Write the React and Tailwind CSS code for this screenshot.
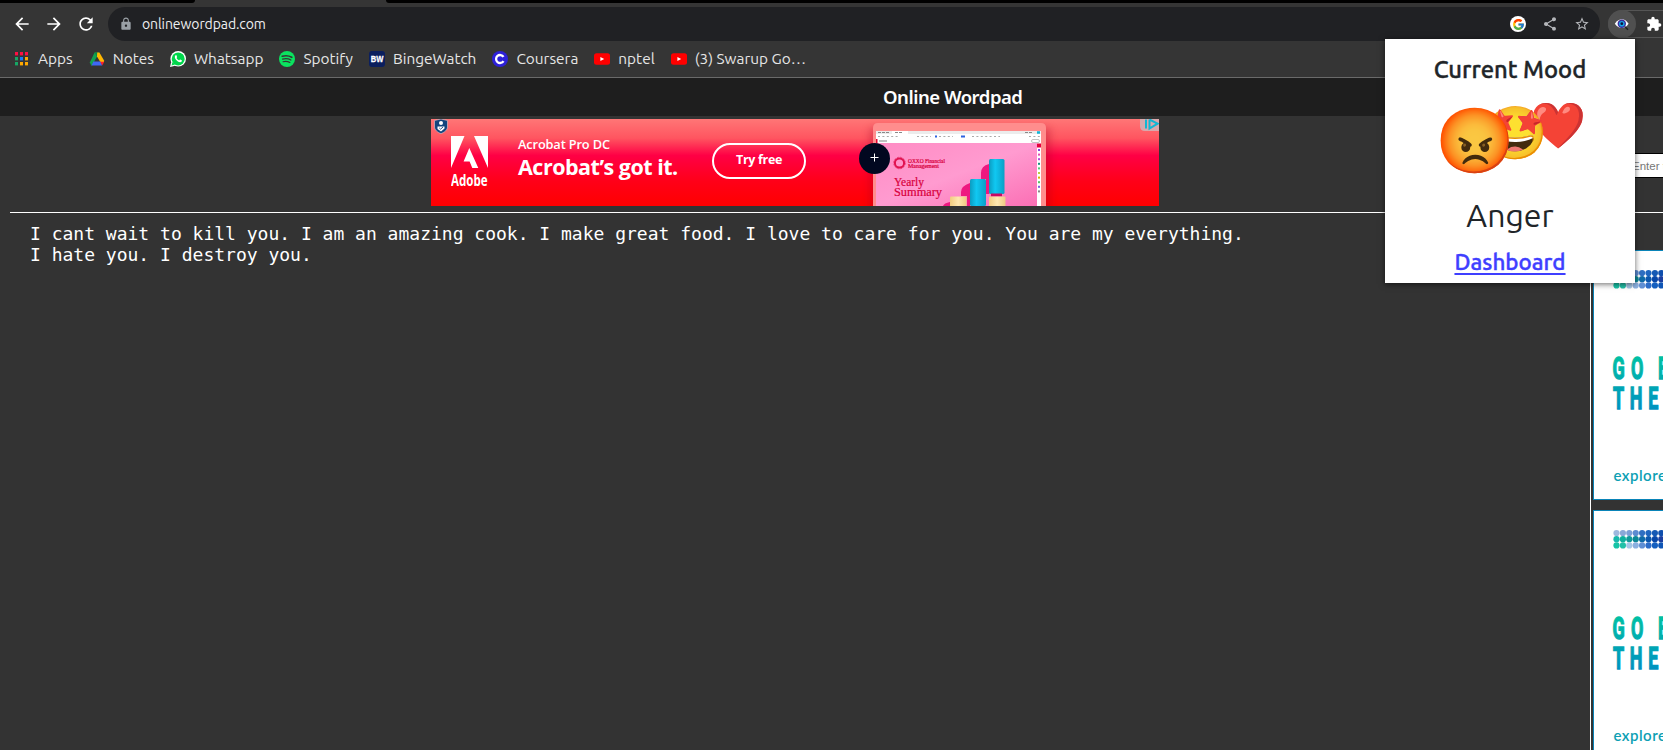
import { MdArrowBack, MdArrowForward, MdRefresh, MdLock, MdShare, MdStarOutline, MdExtension } from "react-icons/md";
import { FcGoogle } from "react-icons/fc";

function AppsIcon() {
  const rows = [
    ["#ff0f43", "#ff0f43", "#ff0f43"],
    ["#17a765", "#1a7cf9", "#ffa800"],
    ["#17a765", "#ffa800", "#ffa800"],
  ];
  return (
    <svg className="size-4" viewBox="0 0 16 16">
      {rows.map((row, r) =>
        row.map((color, c) => (
          <rect key={`${r}${c}`} x={1 + c * 5} y={1 + r * 5} width="3" height="3.4" fill={color} />
        ))
      )}
    </svg>
  );
}

function DriveIcon() {
  return (
    <svg className="size-4" viewBox="0 0 16 16">
      <path d="M5.6 1.6h2.6L8 5.6 4.4 12 2.6 15 .8 11.4z" fill="#12a150" />
      <path d="M5.6 1.6h4.8L8 6z" fill="#0c8a42" />
      <path d="M8.2 1.6h2.2l4.8 8.2-.3 1.2h-3.6L8 5.6z" fill="#ffb700" />
      <path d="M4.4 10.6h7.2L13.2 14.6H2.6z" fill="#3f68f5" />
      <path d="M11.2 10.8h4l-2 3.8z" fill="#ff1f2d" />
    </svg>
  );
}

function WhatsappIcon() {
  return (
    <svg className="size-4" viewBox="0 0 16 16">
      <circle cx="8.2" cy="7.8" r="7.8" fill="#fff" />
      <path d="M0 16l1.2-5 4 3.8z" fill="#fff" />
      <circle cx="8.2" cy="7.9" r="6.5" fill="#00d64b" />
      <path d="M1.5 14.5l1-3.6 2.6 2.6z" fill="#00d64b" />
      <path d="M5.6 4.2c-1.4 1.2-.8 3.2.9 5s4 2.8 5.2 1.2c.4-.7.2-1-.1-1.1l-1.3-.7c-.4-.2-.6.1-1.1.8-1-.3-2.2-1.3-2.7-2.4.6-.6.7-.7.5-1.2l-.5-1.3c-.2-.4-.5-.5-.9-.3z" fill="#fff" />
    </svg>
  );
}

function SpotifyIcon() {
  return (
    <svg className="size-4" viewBox="0 0 16 16">
      <circle cx="8" cy="8" r="8" fill="#0be35f" />
      <g fill="none" stroke="#353535" strokeLinecap="round">
        <path d="M3.2 5.3c3.2-.9 6.8-.6 9.6 1" strokeWidth="1.6" />
        <path d="M3.6 8.1c2.8-.8 5.9-.5 8.3.9" strokeWidth="1.3" />
        <path d="M4 10.7c2.3-.6 4.8-.4 6.9.8" strokeWidth="1.1" />
      </g>
    </svg>
  );
}

function BingeIcon() {
  return (
    <span className="flex size-4 items-center justify-center rounded-[3px] bg-[#0b1f5e]">
      <svg className="h-3 w-[14px]" viewBox="0 0 14 12">
        <text x=".7" y="9.3" fontFamily="Liberation Sans, sans-serif" fontWeight="700" fontSize="9" fill="#fff" stroke="#fff" strokeWidth=".3" textLength="12.6" lengthAdjust="spacingAndGlyphs">BW</text>
      </svg>
    </span>
  );
}

function CourseraIcon() {
  return (
    <svg className="size-4" viewBox="0 0 16 16">
      <circle cx="8" cy="8" r="8" fill="#2d20d8" />
      <path d="M11.5 5.9A4 4 0 1 0 11.5 10.1" fill="none" stroke="#fff" strokeWidth="2.3" />
    </svg>
  );
}

function YoutubeIcon() {
  return (
    <svg className="size-4" viewBox="0 0 16 16">
      <rect y="2.3" width="16" height="11.4" rx="2.5" fill="#f00" />
      <path d="M6.4 5.9v4.2L10.2 8z" fill="#fff" />
    </svg>
  );
}

const bookmarks = [
  ["Apps", AppsIcon],
  ["Notes", DriveIcon],
  ["Whatsapp", WhatsappIcon],
  ["Spotify", SpotifyIcon],
  ["BingeWatch", BingeIcon],
  ["Coursera", CourseraIcon],
  ["nptel", YoutubeIcon],
  ["(3) Swarup Go…", YoutubeIcon],
];

function EyeIcon() {
  return (
    <svg className="h-4 w-4" viewBox="0 0 16 16">
      <path d="M.8 7.8C3.2 4.4 5.5 3.3 7.9 3.3s4.6 1.2 6.7 4.5c-2.1 3-4.3 4.3-6.7 4.3S3 11 .8 7.8z" fill="#fff" />
      <circle cx="7.8" cy="7.7" r="4.2" fill="#3b2a9b" />
      <circle cx="7.8" cy="7.7" r="2.8" fill="#16a5e6" />
      <circle cx="7.8" cy="7.7" r="1.4" fill="#10123c" />
      <path d="M11 10.8l3 3" stroke="#222" strokeWidth="1.5" />
    </svg>
  );
}

function BrowserChrome() {
  return (
    <header className="h-[78px] shrink-0 border-b border-[#6a6a6a] bg-[#353535] font-['Ubuntu',sans-serif]">
      <div className="flex h-[3px] justify-between bg-[#353535]">
        <div className="w-[195px] rounded-br-[5px] bg-black" />
        <div className="w-[1277px] rounded-bl-[5px] bg-black" />
      </div>
      <div className="mt-1 flex h-[34px] items-center overflow-hidden">
        <div className="flex w-[108px] shrink-0 gap-3 pl-3 text-white">
          <MdArrowBack className="size-5" />
          <MdArrowForward className="size-5" />
          <MdRefresh className="size-5" />
        </div>
        <div className="flex h-[34px] w-[1492px] shrink-0 items-center rounded-full bg-[#202124] pr-2.5 pl-[11px]">
          <MdLock className="size-[14px] text-[#9aa0a6]" />
          <span className="ml-[9px] flex-1 text-[14px] tracking-[-0.08px] text-[#eeeff1]">onlinewordpad.com</span>
          <div className="flex items-center gap-4 text-[#b4b6ba]">
            <span className="flex size-4 items-center justify-center rounded-full bg-white">
              <FcGoogle className="size-[13px]" />
            </span>
            <MdShare className="size-4" />
            <MdStarOutline className="size-4" />
          </div>
        </div>
        <div className="ml-2 flex h-7 w-20 shrink-0 items-center rounded-full border border-[#555] text-white">
          <div className="-ml-px flex size-7 shrink-0 items-center justify-center rounded-full bg-[#505050]">
            <EyeIcon />
          </div>
          <MdExtension className="ml-2.5 size-4 shrink-0" />
        </div>
      </div>
      <nav className="flex h-9 items-center gap-4 pl-[14px] text-[15.4px] text-[#e6e6e6]">
        {bookmarks.map(([label, Icon], i) => (
          <a key={i} className="flex items-center gap-2 whitespace-nowrap">
            <Icon />
            {label}
          </a>
        ))}
      </nav>
    </header>
  );
}

function LaptopArt() {
  const swatches = ["#8b46d9", "#e14ab0", "#b44ad9", "#178f80", "#52c97a", "#b9cf45", "#d9b400", "#59c26a", "#7d5ce0", "#888"];
  return (
    <svg className="h-[87px] w-[309px]" viewBox="850 119 309 87">
      <defs>
        <linearGradient id="screen" x1="0" y1="0" x2="1" y2="1">
          <stop offset="0" stopColor="#ff8cc4" />
          <stop offset=".5" stopColor="#ff9bd0" />
          <stop offset="1" stopColor="#fb6fb4" />
        </linearGradient>
        <linearGradient id="blue">
          <stop offset="0" stopColor="#0c9cc0" />
          <stop offset=".4" stopColor="#10c8f2" />
          <stop offset="1" stopColor="#0a9fc6" />
        </linearGradient>
        <linearGradient id="cream">
          <stop offset="0" stopColor="#f2cc80" />
          <stop offset=".5" stopColor="#ffe7b0" />
          <stop offset="1" stopColor="#efc983" />
        </linearGradient>
        <filter id="soft" x="-20%" y="-20%" width="140%" height="140%">
          <feGaussianBlur stdDeviation="4" />
        </filter>
      </defs>
      <rect x="870" y="128" width="180" height="90" fill="#a00020" opacity=".35" filter="url(#soft)" />
      <path d="M873 206v-78q0-5 5-5h163q5 0 5 5v78z" fill="#ff8d8d" />
      <rect x="876" y="131" width="165" height="75" fill="#fff" />
      <rect x="876" y="131" width="165" height="3" fill="#ececec" />
      <rect x="892" y="131" width="16" height="3" fill="#fff" />
      <g strokeWidth="1.2" fill="none">
        <path d="M878 132.5h11M895 132.5h8M1025 132.5h8" stroke="#888" strokeDasharray="3 1" />
        <path d="M1037 132.5h3" stroke="#10b5d8" strokeWidth="2.5" />
        <path d="M878 136.5h20M917 136.5h14M939 136.5h14M972 136.5h28M1029 136.5h11" stroke="#aaa" strokeDasharray="2 2.4" />
        <path d="M935 136.5h2M961 136.5h4" stroke="#2b63e0" strokeWidth="2" />
        <path d="M879 141h8" stroke="#999" />
      </g>
      <rect x="1031.5" y="139.5" width="8" height="3" rx="1.5" fill="#fff" stroke="#999" strokeWidth=".6" />
      <rect x="876" y="139" width="1.5" height="4" fill="#e6002e" />
      <rect x="876" y="143" width="161" height="63" fill="url(#screen)" />
      <rect x="1037" y="143.5" width="4" height="4" fill="#e6003c" />
      {swatches.map((c, i) => (
        <rect key={i} x="1038" y={149 + i * 4.6} width="2" height="2" fill={c} />
      ))}
      <path d="M943 206q1-3 7-4v4zM961 192q0-6 9-9v23h-3v-10h-6zM981 173q0-7 8-9v30h-3v-15h-5z" fill="#ee1880" />
      <rect x="989" y="159" width="15.5" height="35" rx="1.5" fill="url(#blue)" />
      <rect x="991" y="193.5" width="11" height="3" fill="#c80a62" />
      <rect x="970" y="179" width="16" height="27" rx="1.5" fill="url(#blue)" />
      <rect x="950" y="196.5" width="16.5" height="10" rx="1" fill="url(#cream)" />
      <rect x="989" y="196.5" width="16.5" height="10" rx="1" fill="url(#cream)" />
      <circle cx="899.5" cy="163" r="4.6" fill="none" stroke="#e1124f" strokeWidth="2" />
      <circle cx="899.5" cy="163" r="5.8" fill="none" stroke="#e1124f" strokeWidth=".6" strokeDasharray="2 1" />
      <g fill="#d8003c" stroke="#d8003c" strokeWidth=".2" fontFamily="Liberation Serif, serif">
        <text x="908" y="162.8" fontSize="5.5" textLength="37" lengthAdjust="spacingAndGlyphs">OXXO Financial</text>
        <text x="908" y="167.5" fontSize="5.5" textLength="31" lengthAdjust="spacingAndGlyphs">Management</text>
        <text x="894" y="185.5" fontSize="11.5" textLength="30" lengthAdjust="spacingAndGlyphs">Yearly</text>
        <text x="894" y="196" fontSize="11.5" textLength="48" lengthAdjust="spacingAndGlyphs">Summary</text>
      </g>
      <circle cx="874.5" cy="158.5" r="15.5" fill="#020820" />
      <path d="M870.5 157.5h8M874.5 153.5v8" stroke="#fff" strokeWidth="1" />
      <path d="M1140 119h19v12h-14q-5 0-5-5z" fill="#d9a8ac" />
      <path d="M1146 119.5v9M1149.5 119.5v9l8-4.8-8-4.2" fill="none" stroke="#10b7d4" strokeWidth="2" />
    </svg>
  );
}

function AcrobatBanner() {
  return (
    <section className="relative ml-[431px] flex h-[87px] w-[728px] items-start bg-linear-[180deg,#ff7676_0%,#ff5560_22%,#ff0045_42%,#ff0018_72%,#ff0000_100%] font-['Open_Sans',sans-serif] text-white">
      <svg className="absolute top-0 left-[3px] h-[15px] w-[14px]" viewBox="0 0 14 15">
        <path d="M7 0l6.5 1.5V8c0 3-3 5.2-6.5 6.7C3.5 13.2.5 11 .5 8V1.5z" fill="#12457e" stroke="#d9b7c0" strokeWidth=".7" />
        <circle cx="7" cy="4" r="2" fill="#fff" />
        <path d="M3.5 7.5h7v2L7 12.5 3.5 10z" fill="#fff" />
        <path d="M5.3 9l1.3 1.2L9 8" fill="none" stroke="#12457e" strokeWidth=".9" />
      </svg>
      <svg className="mt-[17px] ml-5 h-[56px] w-[39px]" viewBox="0 0 39 56">
        <path d="M0 0h13.5L0 32zM23 0h14v32zM18.3 12l9 20h-6l-2.7-6.5h-6z" fill="#fff" />
        <text x="0" y="49.5" fontSize="15.5" fontWeight="700" fontFamily="Open Sans, sans-serif" fill="#fff" textLength="36.5" lengthAdjust="spacingAndGlyphs">Adobe</text>
      </svg>
      <div className="mt-4 ml-[28px] w-[194px] whitespace-nowrap">
        <p className="text-[12.8px] leading-[18px] font-semibold tracking-[-0.15px]">Acrobat Pro DC</p>
        <p className="text-[21.5px] leading-[28px] font-bold tracking-[-0.5px]">Acrobat’s got it.</p>
      </div>
      <button className="mt-6 flex h-9 w-[94px] shrink-0 items-center justify-center rounded-full border-2 border-white pb-0.5 text-[12.5px] font-bold tracking-tight">Try free</button>
      <div className="ml-auto shrink-0">
        <LaptopArt />
      </div>
    </section>
  );
}

function SideAd() {
  const colors = [
    ["#9fb8de", "#8aa8d8", "#7c9fd6", "#5d8bd0", "#2f6fc2", "#1f66c0", "#1458b4", "#0f4fae", "#1668c4"],
    ["#19b7ac", "#0fb09e", "#0f9a9a", "#0c8796", "#0f6aa8", "#0b57ae", "#0847a8", "#1b3fa0", "#0a52b0"],
    ["#17c3a6", "#22c0a8", "#a4c6e6", "#8bb0e0", "#5f8fd4", "#2c6cc8", "#1660c0", "#0f56b6", "#0d4fae"],
  ];
  return (
    <article className="h-[250px] w-[300px] shrink-0 border border-[#0a84b8] bg-white">
      <svg className="h-[248px] w-[298px]" viewBox="1 1 298 248">
        <defs>
          <linearGradient id="teal" gradientUnits="userSpaceOnUse" x1="0" y1="108" x2="0" y2="160">
            <stop offset="0" stopColor="#00bfa5" />
            <stop offset="1" stopColor="#0091c0" />
          </linearGradient>
        </defs>
        {colors.map((row, r) =>
          row.map((c, i) => <circle key={`${r}${i}`} cx={23.5 + i * 6.4} cy={23 + r * 6.2} r="3.1" fill={c} />)
        )}
        <g fill="url(#teal)" stroke="url(#teal)" strokeWidth="1.4" fontFamily="Roboto, sans-serif" fontWeight="700" fontSize="31.5" transform="scale(.57 1)">
          <text x="34 66.5 114" y="129.5">GOB</text>
          <text x="35 64.5 97" y="159.5">THE</text>
        </g>
        <text x="20.5" y="231" fontFamily="Lato, sans-serif" fontWeight="600" fontSize="15" letterSpacing=".5" fill="#0d9fb4">explore</text>
      </svg>
    </article>
  );
}

function MoodPopup() {
  return (
    <aside className="absolute top-[39px] left-[1385px] flex h-[244px] w-[250px] flex-col items-center bg-white font-['Ubuntu',sans-serif] text-[#212529] shadow-[0_1px_6px_rgba(0,0,0,0.6)]">
      <h1 className="mt-4 text-[23.8px] leading-7 font-medium [-webkit-text-stroke:0.4px_#212529]">Current Mood</h1>
      <div className="relative mt-[13px] h-[90px] w-full font-['Noto_Color_Emoji'] leading-none">
        <span className="absolute top-[7px] left-[145px] text-[45px]">❤️</span>
        <span className="absolute top-[12px] left-[98px] text-[52px]">🤩</span>
        <span className="absolute top-[14px] left-[50px] text-[64px]">😡</span>
      </div>
      <p className="mt-[9px] text-[32px] leading-10">Anger</p>
      <a className="mt-[13px] text-[22.4px] leading-7 font-medium text-[#3f3fff] underline decoration-2 underline-offset-[3px] [-webkit-text-stroke:0.4px_#3f3fff]">Dashboard</a>
    </aside>
  );
}

export default function App() {
  return (
    <div className="relative flex h-[750px] w-[1663px] flex-col overflow-hidden bg-[#333]">
      <BrowserChrome />
      <div className="h-[38px] shrink-0 bg-[#1e1e1e] pl-[883px] font-['Noto_Sans',sans-serif] text-[18.5px] leading-[37px] font-semibold tracking-[-0.48px] text-white">
        Online Wordpad
      </div>
      <div className="ml-2.5 flex h-[97px] shrink-0 items-start border-b border-white pt-[3px]">
        <div className="-ml-2.5">
          <AcrobatBanner />
        </div>
        <div className="mt-[34px] ml-auto h-[25px] w-[63px] overflow-hidden border-y border-black bg-white pl-[32px] font-['Liberation_Sans',sans-serif] text-[11.5px] leading-[24px] whitespace-nowrap text-[#777]">
          Enter t
        </div>
      </div>
      <main className="flex min-h-0 flex-1">
        <div className="w-[1591px] shrink-0 border-r border-white pt-[10px] pl-[30px] font-['DejaVu_Sans_Mono',monospace] text-[18px] leading-[21px] whitespace-pre text-white">
          {"I cant wait to kill you. I am an amazing cook. I make great food. I love to care for you. You are my everything.\nI hate you. I destroy you."}
        </div>
        <div className="ml-0.5 flex flex-col gap-2.5 overflow-hidden pt-[37px]">
          <SideAd />
          <SideAd />
        </div>
      </main>
      <MoodPopup />
    </div>
  );
}
